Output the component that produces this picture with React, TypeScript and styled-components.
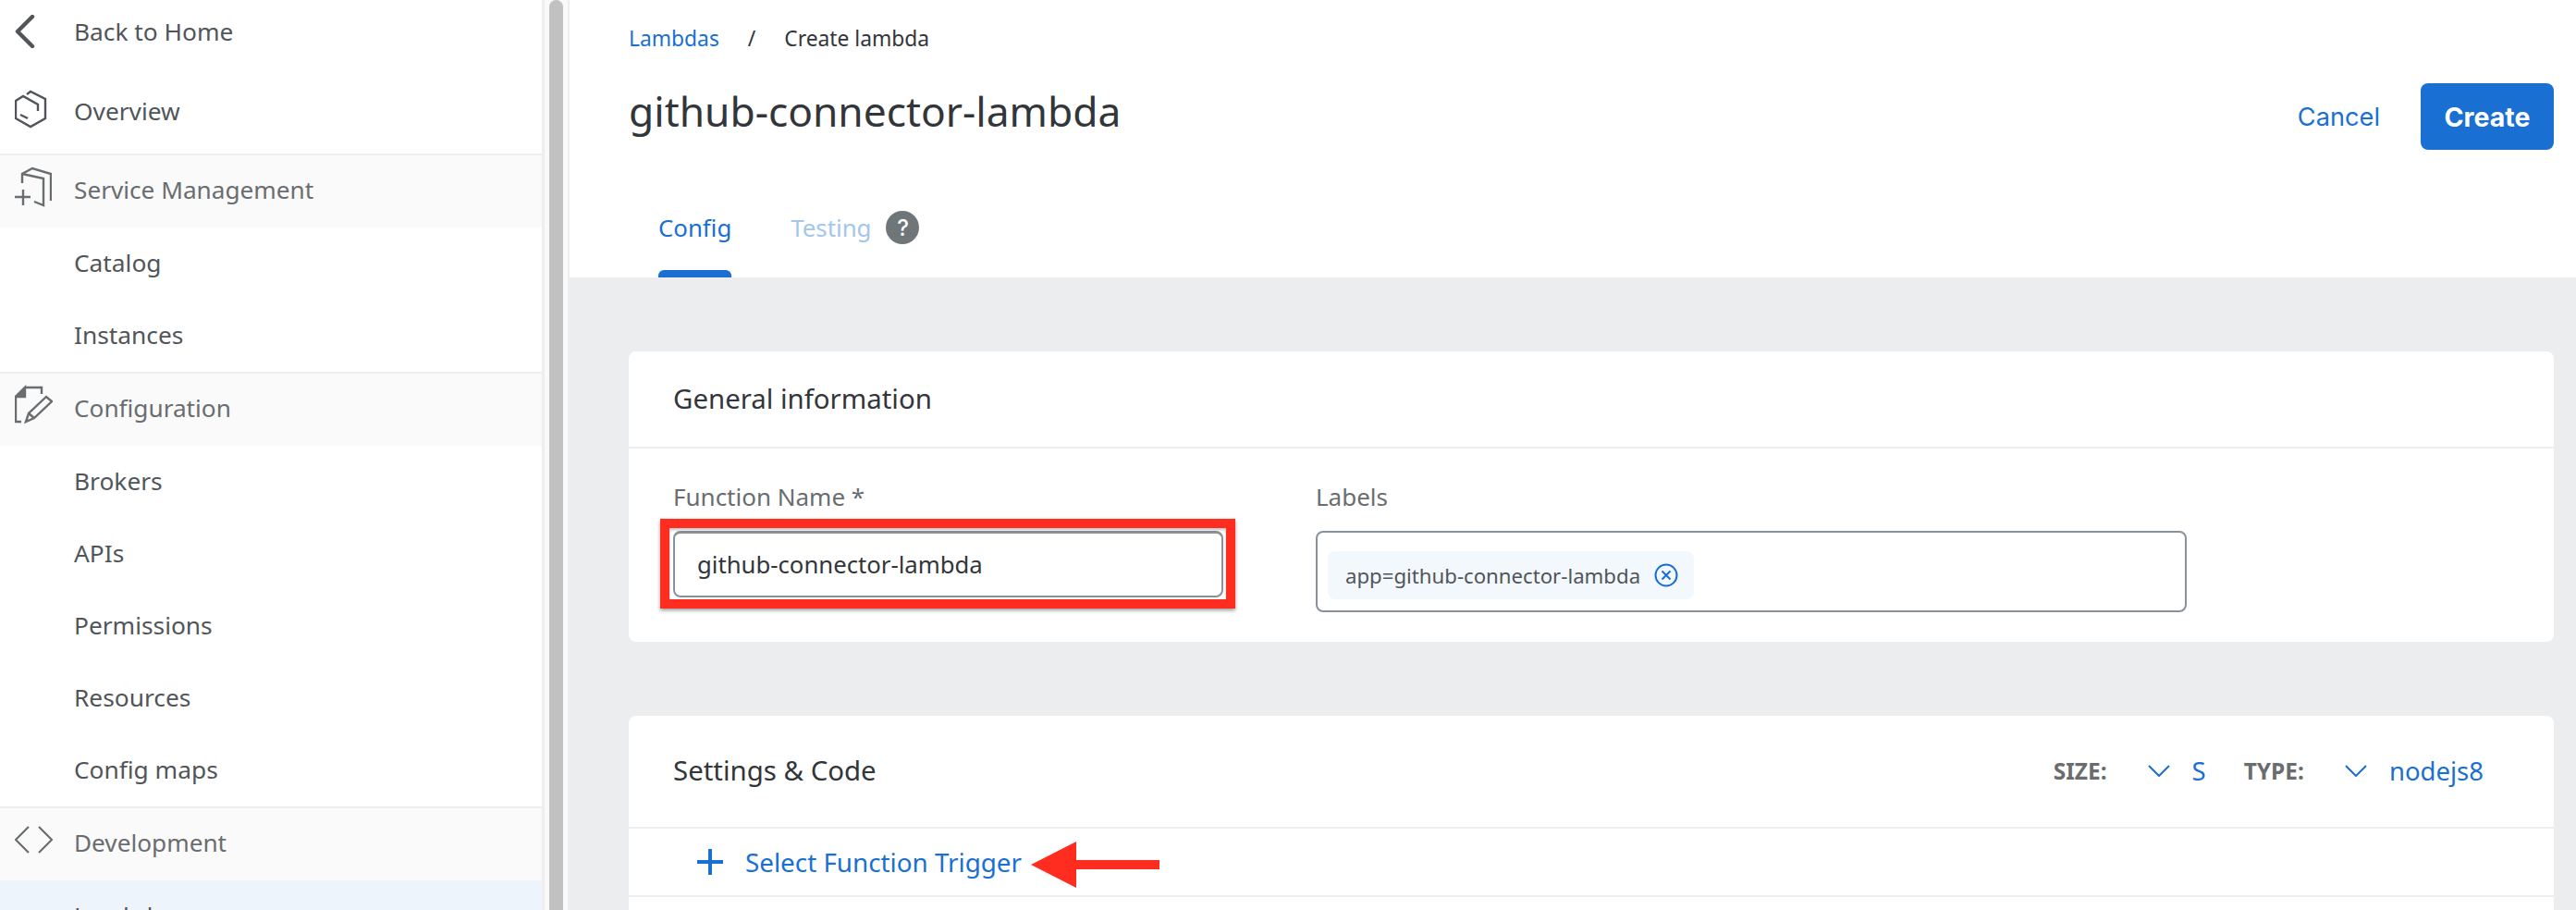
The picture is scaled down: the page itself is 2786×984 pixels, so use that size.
import React from 'react';
import styled, { createGlobalStyle } from 'styled-components';

const GlobalStyle = createGlobalStyle`
  html, body {
    margin: 0;
    padding: 0;
    background: #fff;
  }
  * {
    box-sizing: border-box;
  }
  body {
    font-family: "Noto Sans", "Open Sans", sans-serif;
  }
`;

const Page = styled.div`
  display: flex;
  width: 2786px;
  height: 984px;
  overflow: hidden;
`;

const Sidebar = styled.nav`
  width: 589px;
  flex-shrink: 0;
  border-right: 3px solid #eeeeee;
  background: #fff;
`;

const ScrollTrack = styled.div`
  width: 27px;
  flex-shrink: 0;
  padding: 0 5px;
  border-right: 2px solid #eeeeee;
  background: #fafafa;
`;

const ScrollThumb = styled.div`
  width: 15px;
  height: 100%;
  background: #c1c1c1;
  border-radius: 8px 8px 0 0;
`;

const NavRow = styled.div<{ $height: number; $top?: number }>`
  display: flex;
  align-items: center;
  height: ${p => p.$height}px;
  padding-top: ${p => p.$top || 0}px;
  font-size: 26.3px;
  color: #51555a;
`;

const NavIcon = styled.span`
  display: flex;
  align-items: center;
  width: 80px;
  padding-left: 16px;
  flex-shrink: 0;
`;

const NavHeader = styled.div`
  display: flex;
  align-items: center;
  height: 80px;
  padding-bottom: 4px;
  border-top: 2px solid #eeeeee;
  background: #fafafa;
  font-size: 26.2px;
  color: #6a6d70;
`;

const NavItem = styled.div<{ $active?: boolean }>`
  height: 78px;
  line-height: 76.5px;
  padding-left: 80px;
  font-size: 26.3px;
  color: #51555a;
  background: ${p => (p.$active ? '#edf4fb' : 'transparent')};
`;

const Main = styled.main`
  flex: 1;
  min-width: 0;
  background: #ecedef;
`;

const Head = styled.header`
  height: 300px;
  padding: 0 24px 0 64px;
  background: #fff;
  display: flex;
  flex-direction: column;
`;

const Crumbs = styled.div`
  display: flex;
  align-items: center;
  height: 84px;
  padding-bottom: 2px;
  font-size: 22.8px;
  color: #32363a;
`;

const CrumbLink = styled.a`
  color: #196fd2;
`;

const CrumbSep = styled.span`
  margin: 0 31px;
`;

const TitleRow = styled.div`
  display: flex;
  align-items: center;
  justify-content: space-between;
  height: 84px;
`;

const Title = styled.h1`
  margin: 0 0 12px;
  font-size: 44.3px;
  font-weight: 400;
  color: #32363a;
`;

const Actions = styled.div`
  display: flex;
  align-items: center;
  gap: 44px;
  font-family: Inter, sans-serif;
`;

const CancelLink = styled.a`
  font-size: 27.2px;
  color: #196fd2;
`;

const CreateButton = styled.button`
  width: 144px;
  height: 72px;
  border: 0;
  border-radius: 8px;
  background: #196fd2;
  color: #fff;
  font-family: inherit;
  font-size: 28.5px;
  font-weight: 700;
`;

const Tabs = styled.div`
  display: flex;
  align-items: stretch;
  gap: 64px;
  margin-top: auto;
  padding-left: 32px;
  height: 108px;
`;

const Tab = styled.div<{ $active?: boolean }>`
  position: relative;
  display: flex;
  align-items: center;
  gap: 16px;
  font-size: 25.8px;
  color: ${p => (p.$active ? '#196fd2' : '#a4c6ec')};

  &::after {
    content: '';
    display: ${p => (p.$active ? 'block' : 'none')};
    position: absolute;
    left: 0;
    right: 0;
    bottom: 0;
    height: 8px;
    border-radius: 6px 6px 0 0;
    background: #196fd2;
  }
`;

const HelpBadge = styled.span`
  display: flex;
  align-items: center;
  justify-content: center;
  width: 36px;
  height: 36px;
  border-radius: 50%;
  background: #6f7679;
  color: #fff;
  font-family: Inter, sans-serif;
  font-size: 24px;
  font-weight: 500;
`;

const Content = styled.div`
  display: flex;
  flex-direction: column;
  gap: 80px;
  padding: 80px 24px 0 64px;
`;

const Card = styled.section`
  background: #fff;
  border-radius: 8px;
`;

const CardHead = styled.div<{ $height: number }>`
  display: flex;
  align-items: center;
  justify-content: space-between;
  height: ${p => p.$height}px;
  padding: 0 76px 2px 48px;
  border-bottom: 2px solid #eeeeee;
`;

const CardTitle = styled.h2`
  margin: 0;
  font-size: 29.4px;
  font-weight: 400;
  color: #32363a;
`;

const Fields = styled.div`
  display: flex;
  gap: 100px;
  height: 209px;
  padding: 32px 0 0 48px;
`;

const Field = styled.div<{ $width: number }>`
  position: relative;
  width: ${p => p.$width}px;
`;

const FieldLabel = styled.label`
  display: block;
  height: 57px;
  padding-top: 2px;
  font-size: 26px;
  color: #6a6d70;
`;

const TextInput = styled.input`
  display: block;
  width: 100%;
  height: 72px;
  padding: 0 24px;
  border: 2px solid #89919a;
  border-top-width: 3px;
  border-radius: 8px;
  background: #fff;
  font-family: inherit;
  font-size: 25.7px;
  color: #32363a;
  outline: none;
`;

const Highlight = styled.div`
  position: absolute;
  left: -14px;
  top: 44px;
  width: 622px;
  height: 97px;
  border: 10px solid #ff2d1f;
  box-shadow: 0 2px 4px rgba(0, 0, 0, 0.4), inset 0 2px 3px rgba(0, 0, 0, 0.25);
  pointer-events: none;
`;

const TagBox = styled.div`
  display: flex;
  align-items: center;
  height: 88px;
  padding: 8px 11px 0;
  border: 2px solid #89919a;
  border-radius: 8px;
`;

const Tag = styled.span`
  display: flex;
  align-items: center;
  gap: 15px;
  height: 52px;
  padding: 0 17px 0 19px;
  border-radius: 8px;
  background: #f3f8fd;
  font-size: 22.2px;
  color: #51555a;
`;

const Meta = styled.div`
  display: flex;
  align-items: center;
  font-size: 24px;
`;

const MetaLabel = styled.span`
  font-size: 24.5px;
  font-weight: 700;
  color: #6a6d70;
  margin-right: 44px;
`;

const MetaValue = styled.span`
  color: #196fd2;
  font-size: 27.5px;
  margin-left: 24px;
  margin-right: 41px;

  &:last-child {
    margin-right: 0;
  }
`;

const TriggerRow = styled.div`
  position: relative;
  display: flex;
  align-items: center;
  gap: 24px;
  height: 74px;
  padding-left: 74px;
  border-bottom: 2px solid #eeeeee;
  font-size: 27.8px;
  color: #196fd2;
`;

const ArrowMark = styled.svg`
  position: absolute;
  left: 435px;
  top: 14px;
`;

const EditorPane = styled.div`
  height: 240px;
`;

const BackIcon = () => (
  <svg width="22" height="36" viewBox="0 0 22 36" fill="none" stroke="#51555a" strokeWidth="4.4" strokeLinecap="round" strokeLinejoin="round">
    <path d="M19 2 3 18l16 16" />
  </svg>
);

const OverviewIcon = () => (
  <svg width="35" height="50" viewBox="16 5 35 50" fill="none" stroke="#51555a" strokeWidth="2.4">
    <path d="M29 12l4-3 16 8v21l-16 9-16-9V19l8-5 16 9v7" />
    <path d="M22 34l8 4" />
  </svg>
);

const ServiceIcon = () => (
  <svg width="40" height="50" viewBox="16 5 40 50" fill="none" stroke="#6a6d70" strokeWidth="2.4">
    <path d="M24 23V13l11-6 20 6v29" />
    <path d="M24 13l23 5v29l-10-4" />
    <path d="M16 38h17M25 30v17" />
  </svg>
);

const ConfigIcon = () => (
  <svg width="41" height="50" viewBox="16 7 41 50" fill="none" stroke="#6a6d70" strokeWidth="2.4">
    <path d="M45 17v-7H27L17 20v27h6" />
    <path d="M27 10 17 20h10z" fill="#6a6d70" />
    <path d="M28 47l3-9 19-18 6 5-19 18z" />
    <path d="M31 38l6 5" />
  </svg>
);

const CodeIcon = () => (
  <svg width="41" height="50" viewBox="0 0 41 50" fill="none" stroke="#6a6d70" strokeWidth="2.2">
    <path d="M15 8 1 22l14 14" />
    <path d="M26 8l14 14-14 14" />
  </svg>
);

const Chevron = () => (
  <svg width="24" height="13" viewBox="0 0 24 13" fill="none" stroke="#196fd2" strokeWidth="2">
    <path d="M1 1l11 11L23 1" />
  </svg>
);

const PlusIcon = () => (
  <svg width="28" height="28" viewBox="0 0 28 28" fill="#196fd2">
    <path d="M12 0h4v12h12v4H16v12h-4V16H0v-4h12z" />
  </svg>
);

const CloseCircle = () => (
  <svg width="26" height="26" viewBox="0 0 26 26" fill="none" stroke="#196fd2" strokeWidth="2">
    <circle cx="13" cy="13" r="11.5" />
    <path d="M8.5 8.5l9 9M17.5 8.5l-9 9" />
  </svg>
);

const App: React.FC = () => (
  <Page>
    <GlobalStyle />
    <Sidebar>
      <NavRow $height={68}>
        <NavIcon><BackIcon /></NavIcon>
        Back to Home
      </NavRow>
      <NavRow $height={98} $top={6}>
        <NavIcon><OverviewIcon /></NavIcon>
        Overview
      </NavRow>
      <NavHeader>
        <NavIcon><ServiceIcon /></NavIcon>
        Service Management
      </NavHeader>
      <NavItem>Catalog</NavItem>
      <NavItem>Instances</NavItem>
      <NavHeader>
        <NavIcon><ConfigIcon /></NavIcon>
        Configuration
      </NavHeader>
      <NavItem>Brokers</NavItem>
      <NavItem>APIs</NavItem>
      <NavItem>Permissions</NavItem>
      <NavItem>Resources</NavItem>
      <NavItem>Config maps</NavItem>
      <NavHeader>
        <NavIcon><CodeIcon /></NavIcon>
        Development
      </NavHeader>
      <NavItem $active>Lambdas</NavItem>
    </Sidebar>
    <ScrollTrack>
      <ScrollThumb />
    </ScrollTrack>
    <Main>
      <Head>
        <Crumbs>
          <CrumbLink>Lambdas</CrumbLink>
          <CrumbSep>/</CrumbSep>
          <span>Create lambda</span>
        </Crumbs>
        <TitleRow>
          <Title>github-connector-lambda</Title>
          <Actions>
            <CancelLink>Cancel</CancelLink>
            <CreateButton>Create</CreateButton>
          </Actions>
        </TitleRow>
        <Tabs>
          <Tab $active>Config</Tab>
          <Tab>
            Testing
            <HelpBadge>?</HelpBadge>
          </Tab>
        </Tabs>
      </Head>
      <Content>
        <Card>
          <CardHead $height={105}>
            <CardTitle>General information</CardTitle>
          </CardHead>
          <Fields>
            <Field $width={595}>
              <FieldLabel>Function Name *</FieldLabel>
              <TextInput readOnly value="github-connector-lambda" />
              <Highlight />
            </Field>
            <Field $width={942}>
              <FieldLabel>Labels</FieldLabel>
              <TagBox>
                <Tag>
                  app=github-connector-lambda
                  <CloseCircle />
                </Tag>
              </TagBox>
            </Field>
          </Fields>
        </Card>
        <Card>
          <CardHead $height={122}>
            <CardTitle>Settings &amp; Code</CardTitle>
            <Meta>
              <MetaLabel>SIZE:</MetaLabel>
              <Chevron />
              <MetaValue>S</MetaValue>
              <MetaLabel>TYPE:</MetaLabel>
              <Chevron />
              <MetaValue>nodejs8</MetaValue>
            </Meta>
          </CardHead>
          <TriggerRow>
            <PlusIcon />
            Select Function Trigger
            <ArrowMark width="140" height="50" viewBox="0 0 140 50" fill="#ff2d1f">
              <path d="M0 25 49 0v20h90v10H49v20z" />
            </ArrowMark>
          </TriggerRow>
          <EditorPane />
        </Card>
      </Content>
    </Main>
  </Page>
);

export default App;
